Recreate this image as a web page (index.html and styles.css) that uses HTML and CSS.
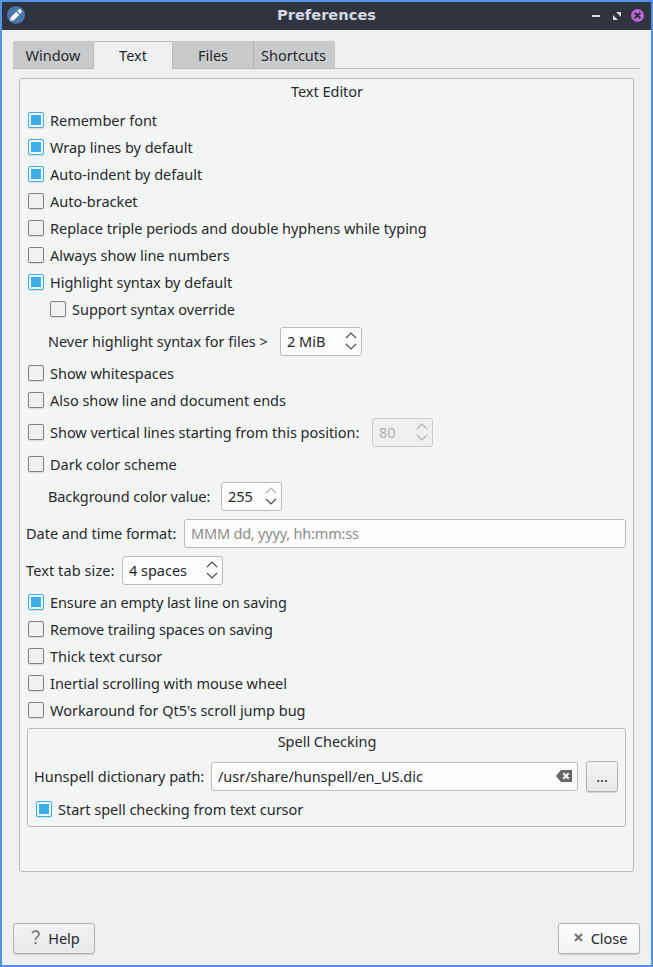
FILE: index.html
```
<!DOCTYPE html>
<html lang="en">
<head>
<meta charset="utf-8">
<title>Preferences</title>
<link rel="stylesheet" href="styles.css">
</head>
<body>
<svg class="defs" width="0" height="0">
  <symbol id="arrows" viewBox="0 0 12 18"><path class="up" d="M1 6 L6 1 L11 6"/><path class="down" d="M1 12 L6 17 L11 12"/></symbol>
</svg>
<div class="window">
  <header class="titlebar">
    <svg class="app-icon" viewBox="0 0 18 18"><circle cx="9" cy="9" r="9" fill="#4877ad"/><path d="M3.2 14.8 L3.8 11.2 L9.3 5.7 L12.3 8.7 L6.8 14.2 Z M10.3 4.8 L11.7 3.4 Q12.7 2.7 13.6 3.6 L14.4 4.4 Q15.3 5.3 14.6 6.3 L13.2 7.7 Z" fill="#fff"/></svg>
    <h1>Preferences</h1>
    <div class="controls">
      <svg width="8" height="12" viewBox="0 0 8 12"><path d="M0 5h8v2H0z" fill="#d3dae3"/></svg>
      <svg width="8" height="8" viewBox="0 0 8 8"><path d="M3 0h5v5zM0 3v5h5z" fill="#d3dae3"/></svg>
      <svg width="13" height="13" viewBox="0 0 13 13"><circle cx="6.5" cy="6.5" r="6.5" fill="#c061d8"/><path d="M3.7 3.7l5.6 5.6M9.3 3.7L3.7 9.3" stroke="#2f343f" stroke-width="2"/></svg>
    </div>
  </header>
  <nav class="tabs">
    <span class="tab window-tab">Window</span><span class="tab active">Text</span><span class="tab files-tab">Files</span><span class="tab shortcuts-tab">Shortcuts</span><i class="rule"></i>
  </nav>
  <main class="group editor">
    <h2>Text Editor</h2>
    <div class="row"><i class="box on"></i><span>Remember font</span></div>
    <div class="row"><i class="box on"></i><span>Wrap lines by default</span></div>
    <div class="row"><i class="box on"></i><span>Auto-indent by default</span></div>
    <div class="row"><i class="box"></i><span>Auto-bracket</span></div>
    <div class="row"><i class="box"></i><span>Replace triple periods and double hyphens while typing</span></div>
    <div class="row"><i class="box"></i><span>Always show line numbers</span></div>
    <div class="row"><i class="box on"></i><span>Highlight syntax by default</span></div>
    <div class="row indent"><i class="box"></i><span>Support syntax override</span></div>
    <div class="row tall nested"><span class="size-label">Never highlight syntax for files &gt;</span><div class="field size"><span>2 MiB</span><svg class="arrows"><use href="#arrows"/></svg></div></div>
    <div class="row"><i class="box"></i><span>Show whitespaces</span></div>
    <div class="row"><i class="box"></i><span>Also show line and document ends</span></div>
    <div class="row tall"><i class="box"></i><span class="line-label">Show vertical lines starting from this position:</span><div class="field short disabled"><span>80</span><svg class="arrows"><use href="#arrows"/></svg></div></div>
    <div class="row"><i class="box"></i><span>Dark color scheme</span></div>
    <div class="row tall nested"><span class="color-label">Background color value:</span><div class="field short"><span>255</span><svg class="arrows at-max" viewBox="0 0 12 18"><path class="up" d="M1 6 L6 1 L11 6"/><path d="M1 12 L6 17 L11 12"/></svg></div></div>
    <div class="row tall plain"><span class="date-label">Date and time format:</span><div class="field grow hint"><span>MMM dd, yyyy, hh:mm:ss</span></div></div>
    <div class="row tall plain"><span class="tab-label">Text tab size:</span><div class="field spaces"><span>4 spaces</span><svg class="arrows"><use href="#arrows"/></svg></div></div>
    <div class="row snug"><i class="box on"></i><span>Ensure an empty last line on saving</span></div>
    <div class="row snug"><i class="box"></i><span>Remove trailing spaces on saving</span></div>
    <div class="row"><i class="box"></i><span>Thick text cursor</span></div>
    <div class="row"><i class="box"></i><span>Inertial scrolling with mouse wheel</span></div>
    <div class="row"><i class="box"></i><span>Workaround for Qt5's scroll jump bug</span></div>
    <section class="group spell">
      <h2>Spell Checking</h2>
      <div class="row tall plain"><span class="path-label">Hunspell dictionary path:</span><div class="field grow"><span>/usr/share/hunspell/en_US.dic</span><svg class="clear" width="16" height="12" viewBox="0 0 16 12"><path d="M5 0H16V12H5L0 6Z" fill="#686868"/><path d="M7.3 3.3l5.4 5.4M12.7 3.3L7.3 8.7" stroke="#fff" stroke-width="2"/></svg></div><button class="browse">...</button></div>
      <div class="row"><i class="box on"></i><span>Start spell checking from text cursor</span></div>
    </section>
  </main>
  <footer>
    <button><svg width="9" height="15" viewBox="0 0 9 15"><path d="M1 3.2 Q2 1 4.5 1 Q8 1 8 4 Q8 5.6 6 7 Q4.5 8.2 4.5 10" fill="none" stroke="#6b6b6b" stroke-width="1.5"/><path d="M3.6 12h1.8v2H3.6z" fill="#6b6b6b"/></svg><span>Help</span></button>
    <button class="close"><svg width="9" height="9" viewBox="0 0 9 9"><path d="M1 1l7 7M8 1L1 8" stroke="#707070" stroke-width="2"/></svg><span>Close</span></button>
  </footer>
</div>
</body>
</html>
```
FILE: styles.css
```
* { box-sizing: border-box; }
body { margin: 0; font: 14.5px/22px "Noto Sans", sans-serif; letter-spacing: -0.02px; color: #26292b; }
.defs { display: block; height: 0; }
.window { width: 653px; height: 967px; border: 2px solid #5294e2; background: #eeeff1; display: flex; flex-direction: column; }
.titlebar { height: 28px; background: #2f343f; display: grid; grid-template-columns: 60px 1fr 60px; align-items: center; }
.app-icon { width: 18px; height: 18px; margin: -2px 0 0 5px; }
h1 { margin: -2px 0 0; text-align: center; font: bold 14.67px/20px "DejaVu Sans", sans-serif; letter-spacing: 0; color: #d3dae3; }
.controls { display: flex; align-items: center; justify-content: flex-end; padding-right: 7px; margin-top: -1px; }
.controls svg { flex: none; }
.controls svg:nth-child(2) { margin: 0 10px 0 13px; }
.tabs { display: flex; height: 28px; margin: 11px 11px 0; white-space: nowrap; }
.tab { height: 28px; line-height: 29px; text-align: center; background: #c9cacc; border-bottom: 1px solid #b9babc; }
.window-tab { width: 80px; border-radius: 2px 0 0 0; }
.active { width: 80px; background: #eeeff1; border: solid #b9babc; border-width: 1px 1px 0; border-radius: 2px 2px 0 0; line-height: 27px; }
.files-tab { width: 80px; }
.shortcuts-tab { width: 82px; padding-right: 2px; border-left: 1px solid #b0b1b3; border-radius: 0 2px 0 0; }
.rule { flex: 1; border-bottom: 1px solid #babbbd; }
.group { border: 1px solid #b9bbbc; border-radius: 3px; background: #f3f5f4; }
.editor { width: 615px; height: 794px; margin: 9px 0 0 17px; padding: 2px 7px 0 8px; display: flex; flex-direction: column; gap: 5px; }
h2 { margin: 0; height: 23px; font-size: inherit; font-weight: normal; text-align: center; line-height: 20px; }
.row { display: flex; align-items: center; height: 22px; flex: none; white-space: nowrap; }
.snug { letter-spacing: -0.1px; }
.tall { height: 32px; }
.indent { padding-left: 22px; }
.nested { padding-left: 20px; }
.plain { margin-left: -2px; }
.box { flex: none; width: 16px; height: 16px; margin-right: 6px; border: 1px solid #808284; border-radius: 2px; background: #f0f1f2; box-shadow: 0 1px 1px #0000001c; }
.on { border-color: #3daee9; padding: 2px; background: #3daee9 content-box; box-shadow: inset 0 0 0 2px #f3f5f4, 0 1px 1px #0000001c; }
.size-label { width: 232px; }
.line-label { width: 322px; }
.color-label { width: 173px; letter-spacing: -0.1px; }
.date-label { width: 158px; }
.tab-label { width: 96px; letter-spacing: 0.1px; }
.path-label { width: 177px; }
.size-label, .line-label, .color-label, .date-label, .tab-label, .path-label { flex: none; }
.field { display: flex; align-items: center; justify-content: space-between; height: 29px; padding: 0 4px 0 6px; border: 1px solid #b9bbbc; border-radius: 3px; background: #fcfcfc; }
.size { width: 82px; }
.short { width: 61px; }
.spaces { width: 101px; }
.grow { flex: 1; }
.hint { color: #8b8d8e; letter-spacing: -0.2px; }
.arrows { width: 12px; height: 18px; fill: none; stroke: #4b4e50; stroke-width: 1.2; }
.at-max .up { stroke: #b0b1b2; }
.disabled { background: #eeefef; color: #b1b2b3; border-color: #cbcccd; }
.disabled .arrows { stroke: #b1b2b3; }
.spell { width: 599px; height: 99px; margin: 2px 0 0 -1px; padding: 2px 7px 0 8px; flex: none; }
.spell .row + .row { margin-top: 6px; }
.spell h2 { height: 29px; }
button { font: inherit; letter-spacing: inherit; color: inherit; display: flex; align-items: center; justify-content: center; height: 31px; width: 82px; padding: 0; border: 1px solid #b2b3b5; border-radius: 3px; background: linear-gradient(#f1f2f3, #e7e8ea); box-shadow: 0 1px 1px #00000025; }
.browse { width: 32px; margin-left: 8px; }
.clear { margin-right: 1px; margin-top: -1px; }
footer { display: flex; justify-content: space-between; margin: 51px 11px 0; }
footer button { gap: 8px; padding: 0 0 2px 3px; }
footer .close { background: linear-gradient(#fdfdfd, #f2f3f3); }
```
